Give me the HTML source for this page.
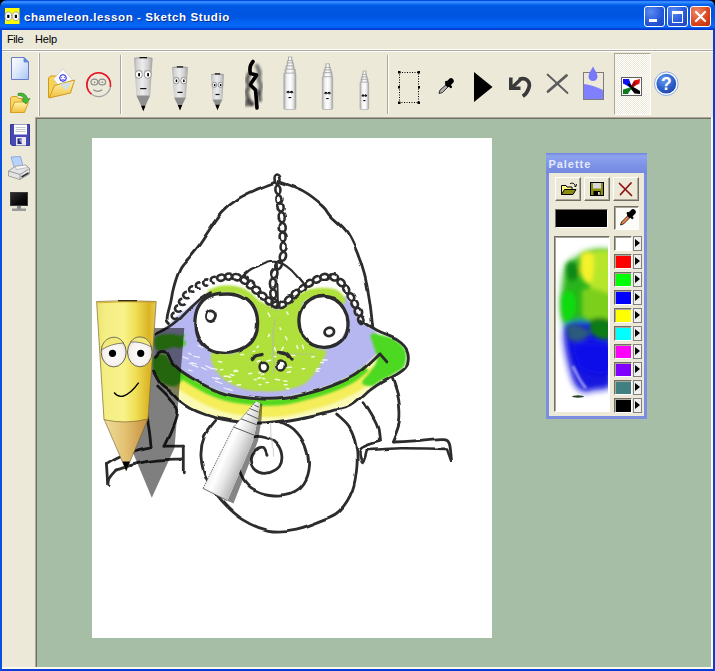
<!DOCTYPE html>
<html><head><meta charset="utf-8"><title>chameleon.lesson - Sketch Studio</title>
<style>
html,body{margin:0;padding:0;}
body{width:715px;height:671px;overflow:hidden;background:#0a3cd8;position:relative;font-family:"Liberation Sans",sans-serif;}
.abs{position:absolute;}
#title{left:0;top:0;width:715px;height:30px;border-radius:7px 7px 0 0;background:linear-gradient(#0046e0 0%,#0a52ea 3%,#3a94ff 5.5%,#3088fc 9%,#0c6af0 14%,#0058e2 20%,#0055e0 55%,#0260f0 70%,#0468f8 85%,#0462f2 91%,#0040d8 96%,#0034c8 100%);}
#title .t{position:absolute;left:24px;top:10.5px;font-size:11.5px;line-height:13px;font-weight:bold;color:#fff;white-space:nowrap;text-shadow:1px 1px 0 #0a2a8a;letter-spacing:0.6px}
.tb{position:absolute;top:6px;width:19px;height:19px;border:1px solid #fff;border-radius:3px;background:radial-gradient(circle at 30% 25%,#5a8af0,#2456d8 60%,#1a46c0);}
#menu{left:2px;top:30px;width:711px;height:19px;background:#ece9d8;font-size:11px;color:#000;}
#menu span{position:absolute;top:3px}
#client{left:2px;top:49px;width:711px;height:620px;background:#ece9d8;}
#green{left:37px;top:119px;width:674px;height:548px;background:#a6bda6;}
#paper{left:92px;top:138px;width:400px;height:500px;background:#fff;}
.hl{position:absolute;height:1px}
.vl{position:absolute;width:1px}
#pal{left:546px;top:153px;width:101px;height:266px;background:#7b8ee0;}
#palc{left:549px;top:173px;width:95px;height:243px;background:#ece9d8;}
.pt{position:absolute;left:548.5px;top:157.5px;font-size:11px;font-weight:bold;color:#e4eafc;letter-spacing:0.95px}
.pb{position:absolute;top:177px;width:24px;height:22px;background:#ece9d8;border:1px solid;border-color:#fff #716f64 #716f64 #fff;box-shadow:inset -1px -1px 0 #aca899;}
.sw{position:absolute;left:614px;width:16px;height:13px;border:1px solid;border-color:#716f64 #fff #fff #716f64;box-shadow:inset 1px 1px 0 #aca899}
.ar{position:absolute;left:633px;width:7px;height:13px;background:#f0f0ee;border:1px solid #808080;}
.ar:after{content:"";position:absolute;left:1px;top:2px;border-left:5px solid #000;border-top:4.5px solid transparent;border-bottom:4.5px solid transparent}
</style></head><body>

<div class="abs" style="left:0;top:0;width:8px;height:8px;background:#000"></div><div class="abs" style="left:707px;top:0;width:8px;height:8px;background:#000"></div><div class="abs" style="left:0;top:30px;width:2px;height:641px;background:#0a50e0"></div>
<div id="title" class="abs"><div class="t">chameleon.lesson - Sketch Studio</div>
<div class="tb" style="left:644px"><div class="abs" style="left:4px;top:12px;width:8px;height:3px;background:#fff"></div></div>
<div class="tb" style="left:667px"><div class="abs" style="left:4px;top:4px;width:9px;height:8px;border:1px solid #fff;border-top-width:3px"></div></div>
<div class="tb" style="left:690px;background:radial-gradient(circle at 30% 25%,#f08868,#d8451c 60%,#b83010)"><svg class="abs" style="left:0;top:0" width="19" height="19"><path d="M5 5 L14 14 M14 5 L5 14" stroke="#fff" stroke-width="2.2" stroke-linecap="round"/></svg></div>
</div>
<div id="menu" class="abs"><span style="left:5px;letter-spacing:-0.4px">File</span><span style="left:33px;letter-spacing:-0.2px">Help</span></div>
<div id="client" class="abs"></div>
<div class="hl" style="left:2px;top:49px;width:711px;background:#fff"></div>
<div class="hl" style="left:2px;top:50px;width:711px;background:#aca899"></div>
<div class="hl" style="left:2px;top:51px;width:711px;background:#fff"></div>
<div class="abs" style="left:35px;top:117px;width:676px;height:550px;background:#716f64"></div>
<div class="abs" style="left:35px;top:117px;width:676px;height:1px;background:#aca899"></div>
<div class="abs" style="left:35px;top:117px;width:1px;height:550px;background:#aca899"></div>
<div id="green" class="abs"></div>
<div class="abs" style="left:2px;top:667px;width:711px;height:2px;background:#fdfbee"></div>
<div class="abs" style="left:711px;top:117px;width:2px;height:552px;background:#fdfbee"></div>
<div id="paper" class="abs"></div>
<!-- grips / separators -->
<div class="vl" style="left:38px;top:53px;height:63px;background:#fff"></div>
<div class="vl" style="left:39px;top:53px;height:63px;background:#aca899"></div>
<div class="vl" style="left:120px;top:55px;height:59px;background:#aca899"></div>
<div class="vl" style="left:121px;top:55px;height:59px;background:#fff"></div>
<div class="vl" style="left:387px;top:55px;height:59px;background:#aca899"></div>
<div class="vl" style="left:388px;top:55px;height:59px;background:#fff"></div>
<!-- pressed button -->
<div class="abs" style="left:614px;top:53px;width:35px;height:60px;border:1px solid;border-color:#aca899 #fff #fff #aca899;background:repeating-conic-gradient(#fff 0% 25%,#ece9d8 0% 50%) 0 0/2px 2px"></div>

<svg class="abs" style="left:0;top:0" width="715" height="671" viewBox="0 0 715 671">
<defs>
<linearGradient id="cyl" x1="0" x2="1" y1="0" y2="0"><stop offset="0" stop-color="#a8a8a8"/><stop offset="0.15" stop-color="#d4d4d4"/><stop offset="0.45" stop-color="#ececec"/><stop offset="0.75" stop-color="#d2d2d2"/><stop offset="1" stop-color="#a0a0a0"/></linearGradient>
<linearGradient id="mk" x1="0" x2="1" y1="0" y2="0"><stop offset="0" stop-color="#a8a8a8"/><stop offset="0.25" stop-color="#f0f0f0"/><stop offset="0.55" stop-color="#ffffff"/><stop offset="0.8" stop-color="#e0e0e0"/><stop offset="1" stop-color="#989898"/></linearGradient>
<linearGradient id="doc" x1="0" x2="1" y1="0" y2="1"><stop offset="0" stop-color="#ffffff"/><stop offset="0.5" stop-color="#dbe8fc"/><stop offset="1" stop-color="#a8c4f4"/></linearGradient>
<linearGradient id="fold" x1="0" x2="0" y1="0" y2="1"><stop offset="0" stop-color="#fff6b0"/><stop offset="1" stop-color="#f0c040"/></linearGradient>
<radialGradient id="help" cx="0.4" cy="0.3" r="0.8"><stop offset="0" stop-color="#6a9cf0"/><stop offset="0.6" stop-color="#2c5fc8"/><stop offset="1" stop-color="#1c3fa0"/></radialGradient>
<linearGradient id="mon" x1="0" x2="1" y1="0" y2="1"><stop offset="0" stop-color="#303030"/><stop offset="0.6" stop-color="#0c0c0c"/><stop offset="1" stop-color="#000"/></linearGradient>
<filter id="b1"><feGaussianBlur stdDeviation="1"/></filter>
<filter id="b05"><feGaussianBlur stdDeviation="0.5"/></filter>
</defs>
<!-- app icon -->
<rect x="5" y="8" width="14.500" height="16" fill="#fcfc00"/>
<ellipse cx="8.300" cy="16.200" rx="3.300" ry="4.300" fill="#fff" stroke="#9a9aa4" stroke-width="0.900"/><ellipse cx="15.900" cy="16.200" rx="3.300" ry="4.300" fill="#fff" stroke="#9a9aa4" stroke-width="0.900"/>
<rect x="7.200" y="14.800" width="2.200" height="3.200" fill="#000"/><rect x="14.800" y="14.800" width="2.200" height="3.200" fill="#000"/>
<!-- new doc -->
<path d="M11.5 57.5 H24 L28.5 62 V79.5 H11.5 Z" fill="url(#doc)" stroke="#6c7ccc" stroke-width="1"/>
<path d="M24 57.5 V62 H28.5 Z" fill="#4a90f0" stroke="#6c7ccc" stroke-width="0.8"/>
<!-- open folder + green arrow -->
<path d="M10.5 112.5 L10.5 98 L12 96.5 H17 L18.5 98.5 H25 V101" fill="#f6d86a" stroke="#d8a020" stroke-width="1"/>
<path d="M10.5 112.5 L14.5 102 H28.5 L24.5 112.5 Z" fill="url(#fold)" stroke="#d8a020" stroke-width="1"/>
<path d="M18 93.5 C23 92 27 95 27.5 99 L30 98.5 L26 104 L21.5 100 L24 99.5 C23.5 96.5 21 95 18 95.5 Z" fill="#48b838" stroke="#2c8a20" stroke-width="0.7"/>
<!-- floppy -->
<path d="M10.5 124.5 H29.5 V145.5 H12 L10.5 144 Z" fill="#4848b4" stroke="#383898" stroke-width="1"/>
<rect x="14" y="124.5" width="13" height="10" fill="#fff"/>
<path d="M15.5 127.5 H25.5 M15.5 129.5 H25.5 M15.5 131.5 H25.5" stroke="#c4c4cc" stroke-width="1"/>
<rect x="16" y="137" width="10" height="8.5" fill="#e8e8f0"/>
<path d="M17.500 138.500 H22 V144 H17.500 Z" fill="#28287c"/><path d="M19 140 L22 138.500 V144 Z" fill="#9c9cd0"/>
<!-- printer -->
<path d="M11 157 L20.500 156.500 L23 166.500 L14.500 168 Z" fill="#b8d4fa" stroke="#7c9cd8" stroke-width="0.8"/>
<path d="M8.500 171 L15 166.500 L26 165 L29.500 168.500 L29.500 174 L20 179.500 L8.500 176 Z" fill="#e4e4e4" stroke="#909090" stroke-width="0.8"/>
<path d="M8.500 171 L20 174.500 L29.500 168.500 M20 174.500 V179.500" stroke="#888" stroke-width="0.8" fill="none"/>
<path d="M15 166.500 L26 165 L27.500 167.500 L16.500 169.500 Z" fill="#f8f8f8" stroke="#a0a0a0" stroke-width="0.6"/>
<path d="M21.500 177 L28.500 173" stroke="#303030" stroke-width="1.6"/>
<!-- monitor -->
<rect x="10" y="192" width="18" height="14" fill="#3c3c3c"/>
<rect x="11" y="193" width="16" height="12" fill="url(#mon)"/>
<rect x="17" y="206" width="4" height="3" fill="#8c8c8c"/>
<rect x="12" y="208.500" width="14" height="2.500" fill="#9a9a9a"/>
<!-- folder with mail -->
<path d="M48.500 97.500 L48.500 78 L50.500 76 H57 L59 78.500 H70 V82" fill="#f6d45c" stroke="#d09818" stroke-width="1"/>
<path d="M63 69 L72 79.500 L62 90 L53.500 79 Z" fill="#fff" stroke="#c8c8c8" stroke-width="0.8"/>
<circle cx="63" cy="78" r="3.300" fill="none" stroke="#1010f0" stroke-width="1"/>
<path d="M61.600 77 V78 M64.400 77 V78 M61.500 79.300 Q63 80.800 64.500 79.300" stroke="#1010f0" stroke-width="0.700" fill="none"/>
<path d="M59.500 84 L66 90.500 L72.500 81 Z" fill="#c4dcf0" stroke="#a0b8d0" stroke-width="0.5"/>
<path d="M49 98 L54.500 85.500 L74.500 80 L70.500 93 Z" fill="url(#fold)" stroke="#d09818" stroke-width="1"/>
<path d="M59.500 84 L66 90.500 L72 82" fill="#c8e0f4" opacity="0.85"/>
<!-- smiley -->
<circle cx="98.700" cy="84.700" r="11.900" fill="#ece9d8" stroke="#a0a0a0" stroke-width="1.300"/>
<path d="M91.400 94.100 A11.900 11.900 0 1 1 110.400 86.800" fill="none" stroke="#f01020" stroke-width="1.600"/>
<ellipse cx="94.400" cy="82" rx="3.400" ry="2.900" fill="none" stroke="#8c8c8c" stroke-width="1.200"/>
<ellipse cx="102.200" cy="82" rx="3.400" ry="2.900" fill="none" stroke="#8c8c8c" stroke-width="1.200"/>
<circle cx="94.600" cy="82.300" r="0.800" fill="#777"/><circle cx="102.400" cy="82.300" r="0.800" fill="#777"/>
<path d="M93.300 89.800 Q98 92.800 102.300 89.800" fill="none" stroke="#8c8c8c" stroke-width="1.200"/>
<!-- pens -->
<path d="M134.1 58.2 Q143.3 56.6 152.6 58.2 L150.2 95.5 L136.4 95.5 Z" fill="url(#cyl)"/><path d="M134.6 58.2 Q143.3 56.8 152.1 58.2" stroke="#9a9a9a" stroke-width="1" fill="none"/><path d="M136.4 95.5 L150.2 95.5 L143.3 110.6 Z" fill="#8e8e8e"/><path d="M141.1 105.8 L145.5 105.8 L143.3 111.2 Z" fill="#000"/><rect x="139.6" y="57.0" width="7.4" height="1.3" fill="#111"/><ellipse cx="138.8" cy="74.5" rx="3.6" ry="3.9" fill="#fff" stroke="#8c8c8c" stroke-width="0.9"/><rect x="138.2" y="73.1" width="1.8" height="3.2" fill="#000"/><path d="M135.2 71.3 Q138.8 68.7 142.4 71.3" stroke="#a8a8a8" stroke-width="0.8" fill="none"/><ellipse cx="147.8" cy="74.5" rx="3.6" ry="3.9" fill="#fff" stroke="#8c8c8c" stroke-width="0.9"/><rect x="147.2" y="73.1" width="1.8" height="3.2" fill="#000"/><path d="M144.2 71.3 Q147.8 68.7 151.4 71.3" stroke="#a8a8a8" stroke-width="0.8" fill="none"/><rect x="140.2" y="88.0" width="6.2" height="1.2" fill="#111"/><path d="M172.1 67.5 Q180.0 65.9 187.9 67.5 L185.9 97.6 L174.1 97.6 Z" fill="url(#cyl)"/><path d="M172.6 67.5 Q180.0 66.1 187.4 67.5" stroke="#9a9a9a" stroke-width="1" fill="none"/><path d="M174.1 97.6 L185.9 97.6 L180.0 109.8 Z" fill="#8e8e8e"/><path d="M177.8 105.0 L182.2 105.0 L180.0 110.4 Z" fill="#000"/><rect x="176.8" y="66.3" width="6.3" height="1.3" fill="#111"/><ellipse cx="176.3" cy="80.7" rx="2.9" ry="3.1" fill="#fff" stroke="#8c8c8c" stroke-width="0.9"/><rect x="175.7" y="79.5" width="1.5" height="2.6" fill="#000"/><path d="M173.4 78.1 Q176.3 76.1 179.2 78.1" stroke="#a8a8a8" stroke-width="0.8" fill="none"/><ellipse cx="183.7" cy="80.7" rx="2.9" ry="3.1" fill="#fff" stroke="#8c8c8c" stroke-width="0.9"/><rect x="183.1" y="79.5" width="1.5" height="2.6" fill="#000"/><path d="M180.8 78.1 Q183.7 76.1 186.6 78.1" stroke="#a8a8a8" stroke-width="0.8" fill="none"/><rect x="177.5" y="91.8" width="5.0" height="1.2" fill="#111"/><path d="M211.0 74.5 Q217.5 72.9 224.0 74.5 L222.4 99.5 L212.6 99.5 Z" fill="url(#cyl)"/><path d="M211.5 74.5 Q217.5 73.1 223.5 74.5" stroke="#9a9a9a" stroke-width="1" fill="none"/><path d="M212.6 99.5 L222.4 99.5 L217.5 109.6 Z" fill="#8e8e8e"/><path d="M215.3 104.8 L219.7 104.8 L217.5 110.2 Z" fill="#000"/><rect x="214.9" y="73.3" width="5.2" height="1.3" fill="#111"/><ellipse cx="214.5" cy="85.0" rx="2.3" ry="2.5" fill="#fff" stroke="#8c8c8c" stroke-width="0.9"/><rect x="213.9" y="84.1" width="1.5" height="2.1" fill="#000"/><path d="M212.2 82.9 Q214.5 81.3 216.8 82.9" stroke="#a8a8a8" stroke-width="0.8" fill="none"/><ellipse cx="220.5" cy="85.0" rx="2.3" ry="2.5" fill="#fff" stroke="#8c8c8c" stroke-width="0.9"/><rect x="219.9" y="84.1" width="1.5" height="2.1" fill="#000"/><path d="M218.2 82.9 Q220.5 81.3 222.8 82.9" stroke="#a8a8a8" stroke-width="0.8" fill="none"/><rect x="215.5" y="93.9" width="4.0" height="1.2" fill="#111"/>
<!-- brush -->
<g filter="url(#b1)">
<path d="M257 66 L259.500 72 L259 80 L261 86 L259 94" stroke="#555" stroke-width="4.500" fill="none" opacity="0.75" stroke-linecap="round"/>
<path d="M249 74 L247 80 L249 86 L246.500 92 L248 98 L247 104 L252 104" stroke="#484848" stroke-width="4.500" fill="none" opacity="0.8" stroke-linecap="round"/>
<path d="M249 100 L252 104 M259 92 L260 100" stroke="#2c2c2c" stroke-width="4" fill="none" opacity="0.7" stroke-linecap="round"/>
</g>
<path d="M253 61.500 C250 65 249.500 70 250.500 73.500 L256.500 75 C255 79 251 82 250.500 85 L255.500 90 C256 96 256.500 101 257 108" stroke="#000" stroke-width="3.600" fill="none" stroke-linecap="round" stroke-linejoin="round"/>
<!-- markers -->
<rect x="288.3" y="57.0" width="3.6" height="3.7" fill="url(#mk)" stroke="#a4a4a4" stroke-width="0.7"/><rect x="287.4" y="60.7" width="5.4" height="2.3" fill="url(#mk)" stroke="#a4a4a4" stroke-width="0.7"/><rect x="287.0" y="63.0" width="6.4" height="3.0" fill="url(#mk)" stroke="#a4a4a4" stroke-width="0.7"/><rect x="286.0" y="66.0" width="8.0" height="3.2" fill="url(#mk)" stroke="#a4a4a4" stroke-width="0.7"/><rect x="285.0" y="69.2" width="10.2" height="4.0" fill="url(#mk)" stroke="#a4a4a4" stroke-width="0.7"/><path d="M283.8 73.2 H295.9 V108.0 Q295.9 109.5 294.4 109.5 H285.3 Q283.8 109.5 283.8 108.0 Z" fill="url(#mk)" stroke="#aaaaaa" stroke-width="0.7"/><path d="M286.8 92.8 Q288.2 89.8 289.5 92.8" stroke="#000" stroke-width="1.3" fill="none"/><rect x="287.7" y="91.8" width="1" height="1.6" fill="#222"/><path d="M290.2 92.8 Q291.6 89.8 292.9 92.8" stroke="#000" stroke-width="1.3" fill="none"/><rect x="291.1" y="91.8" width="1" height="1.6" fill="#222"/><rect x="288.5" y="97.0" width="2.7" height="1.1" fill="#000"/><rect x="325.9" y="63.8" width="3.5" height="3.6" fill="url(#mk)" stroke="#a4a4a4" stroke-width="0.7"/><rect x="325.0" y="67.4" width="5.3" height="2.6" fill="url(#mk)" stroke="#a4a4a4" stroke-width="0.7"/><rect x="324.0" y="70.0" width="7.2" height="2.8" fill="url(#mk)" stroke="#a4a4a4" stroke-width="0.7"/><rect x="323.2" y="72.8" width="8.9" height="4.0" fill="url(#mk)" stroke="#a4a4a4" stroke-width="0.7"/><path d="M322.3 76.8 H332.7 V108.0 Q332.7 109.5 331.2 109.5 H323.8 Q322.3 109.5 322.3 108.0 Z" fill="url(#mk)" stroke="#aaaaaa" stroke-width="0.7"/><path d="M324.6 93.8 Q325.9 90.8 327.2 93.8" stroke="#000" stroke-width="1.3" fill="none"/><rect x="325.4" y="92.8" width="1" height="1.6" fill="#222"/><path d="M327.8 93.8 Q329.1 90.8 330.4 93.8" stroke="#000" stroke-width="1.3" fill="none"/><rect x="328.6" y="92.8" width="1" height="1.6" fill="#222"/><rect x="326.2" y="98.0" width="2.5" height="1.1" fill="#000"/><rect x="363.0" y="71.0" width="3.0" height="3.5" fill="url(#mk)" stroke="#a4a4a4" stroke-width="0.7"/><rect x="362.3" y="74.5" width="4.3" height="2.5" fill="url(#mk)" stroke="#a4a4a4" stroke-width="0.7"/><rect x="361.6" y="77.0" width="5.7" height="2.3" fill="url(#mk)" stroke="#a4a4a4" stroke-width="0.7"/><rect x="361.0" y="79.3" width="7.0" height="2.9" fill="url(#mk)" stroke="#a4a4a4" stroke-width="0.7"/><path d="M360.0 82.2 H368.7 V108.1 Q368.7 109.6 367.2 109.6 H361.5 Q360.0 109.6 360.0 108.1 Z" fill="url(#mk)" stroke="#aaaaaa" stroke-width="0.7"/><path d="M362.0 96.3 Q363.0 93.3 364.0 96.3" stroke="#000" stroke-width="1.3" fill="none"/><rect x="362.5" y="95.3" width="1" height="1.6" fill="#222"/><path d="M364.7 96.3 Q365.7 93.3 366.7 96.3" stroke="#000" stroke-width="1.3" fill="none"/><rect x="365.2" y="95.3" width="1" height="1.6" fill="#222"/><rect x="363.3" y="100.0" width="2.1" height="1.1" fill="#000"/>
<!-- selection rect -->
<rect x="399.500" y="72.500" width="19" height="30" fill="none" stroke="#000" stroke-width="1" stroke-dasharray="1 1.500"/>
<g fill="#000"><rect x="398" y="71" width="2.500" height="2.500"/><rect x="417.500" y="71" width="2.500" height="2.500"/><rect x="398" y="101.500" width="2.500" height="2.500"/><rect x="417.500" y="101.500" width="2.500" height="2.500"/><rect x="398" y="86" width="2" height="2.500"/><rect x="418" y="86" width="2" height="2.500"/></g>
<!-- eyedropper -->
<path d="M439 93.500 L440 90 L447.500 83.500 L449.500 85.500 L442.500 92.500 Z" fill="#b0b0b0" stroke="#202020" stroke-width="0.9"/>
<path d="M446.200 82.200 L450.800 86.800" stroke="#000" stroke-width="2.600" stroke-linecap="round"/>
<path d="M448 84 L451 81" stroke="#000" stroke-width="5.500" stroke-linecap="round"/>
<!-- play -->
<path d="M474 72 L492.500 87 L474 102 Z" fill="#000"/>
<!-- undo -->
<path d="M519 79.500 C526 76.500 531 82 528.800 88 C527.800 91.500 525.500 94.500 522.800 96.300" fill="none" stroke="#3a3a3a" stroke-width="3.700" stroke-linecap="butt"/>
<path d="M509 77.500 H512.600 V86.500 H520.500 V90 H509 Z" fill="#3a3a3a"/>
<path d="M511 88.500 L520.500 79.500" stroke="#3a3a3a" stroke-width="3.400"/>
<!-- X -->
<path d="M547.500 74.500 L567.500 93" stroke="#5c5c5c" stroke-width="1.800" stroke-linecap="round"/>
<path d="M566.500 75.500 L548 91.500" stroke="#5c5c5c" stroke-width="2.800" stroke-linecap="round"/>
<!-- fill -->
<rect x="583.500" y="72.500" width="20" height="27" fill="#ece9d8" stroke="#7c7c7c" stroke-width="1"/>
<path d="M584 84 C590 84.500 596 87 603 90 V99 H584 Z" fill="#8080ff"/>
<path d="M593 66.500 C594.500 70 597.500 73 597.500 76.500 A4.500 4.500 0 0 1 588.500 76.500 C588.500 73 591.500 70 593 66.500 Z" fill="#7878f8"/>
<!-- color icon -->
<rect x="621.500" y="77.500" width="20" height="18" fill="#fff" stroke="#606060" stroke-width="1"/>
<path d="M623 79 L629 79 L630.500 83.500 L632 86.500 L630 87.500 L626 85 L623 83.500 Z" fill="#1010f0"/>
<path d="M634 80.500 L640 79 L639.500 83.500 L635 86 L632.500 88 L631 86 Z" fill="#e01010"/>
<path d="M623 89.500 L628.500 88 L631 86.500 L632 88.500 L629 92 L628 94 L623 94 Z" fill="#0c7c1c"/>
<path d="M632 86.500 L636 88.500 L640 91 L640 94 L634.500 93.500 L631 89 Z" fill="#000"/>
<path d="M628.500 84 L635 90.500" stroke="#000" stroke-width="2"/>
<path d="M635.500 82 L632 87" stroke="#7c1010" stroke-width="2"/>
<!-- help -->
<circle cx="666.300" cy="83.700" r="11.800" fill="#fff" stroke="#8caae6" stroke-width="1"/>
<circle cx="666.300" cy="83.700" r="9.900" fill="url(#help)"/>
<text x="666.300" y="89.900" font-family="Liberation Sans, sans-serif" font-weight="bold" font-size="17.500" fill="#fff" text-anchor="middle">?</text>
</svg>
<svg class="abs" style="left:0;top:0" width="715" height="671" viewBox="0 0 715 671">
<defs>
<filter id="pf1" x="-10%" y="-10%" width="120%" height="120%"><feGaussianBlur stdDeviation="1.2"/></filter>
<filter id="pf2" x="-10%" y="-10%" width="120%" height="120%"><feGaussianBlur stdDeviation="2.2"/></filter>
<filter id="wob" color-interpolation-filters="sRGB" x="-5%" y="-5%" width="110%" height="110%"><feTurbulence type="fractalNoise" baseFrequency="0.035" numOctaves="2" seed="4" result="n"/><feDisplacementMap in="SourceGraphic" in2="n" scale="4.5" xChannelSelector="R" yChannelSelector="G"/></filter>
<clipPath id="paperc"><rect x="92" y="138" width="400" height="500"/></clipPath>
<linearGradient id="pcl" x1="0" x2="1" y1="0" y2="0"><stop offset="0" stop-color="#ece472"/><stop offset="0.15" stop-color="#f4ee84"/><stop offset="0.45" stop-color="#f7f28a"/><stop offset="0.65" stop-color="#f0e058"/><stop offset="0.88" stop-color="#dab424"/><stop offset="1" stop-color="#e6cc58"/></linearGradient>
<linearGradient id="pcone" x1="0" x2="1" y1="0" y2="0"><stop offset="0" stop-color="#f0dc9a"/><stop offset="0.5" stop-color="#e2c070"/><stop offset="1" stop-color="#c48e3c"/></linearGradient>
<linearGradient id="mtool" gradientUnits="userSpaceOnUse" x1="214" y1="455" x2="246" y2="469"><stop offset="0.05" stop-color="#ececec"/><stop offset="0.3" stop-color="#ffffff"/><stop offset="0.55" stop-color="#e6e6e6"/><stop offset="0.85" stop-color="#bcbcbc"/><stop offset="1" stop-color="#acacac"/></linearGradient>
<radialGradient id="eyeg" cx="0.5" cy="0.55" r="0.6"><stop offset="0" stop-color="#ffffff"/><stop offset="0.7" stop-color="#f4f0ec"/><stop offset="1" stop-color="#c8bcb4"/></radialGradient>
</defs>
<g clip-path="url(#paperc)">
<g filter="url(#pf1)">
<path d="M154.5 335.5 L159.4 331.7 L169.0 325.0 L175.0 318.0 L202.0 297.5 L215.0 300.0 L260.0 305.0 L274.2 307.0 L281.8 307.0 L300.0 300.0 L340.0 298.0 L347.0 296.0 L353.2 305.0 L357.0 312.0 L359.6 321.0 L376.0 330.7 L380.0 345.0 L379.0 352.5 L366.5 364.4 L351.9 375.8 L329.5 385.9 L307.0 392.6 L284.8 397.7 L262.4 398.6 L240.0 396.5 L225.0 393.5 L207.8 386.9 L190.4 377.2 L178.8 369.5 L171.0 361.7 L167.0 354.0 L161.3 352.0 L158.0 353.0 L154.5 356.9 Z" fill="#b6b6f0"/>
<path d="M154.5 356.9 L158.0 353.0 L161.3 352.0 L167.0 354.0 L171.0 361.7 L178.8 369.5 L190.4 377.2 L207.8 386.9 L225.0 393.5 L240.0 396.5 L262.4 398.6 L284.8 397.7 L307.0 392.6 L329.5 385.9 L351.9 375.8 L366.5 364.4 L379.0 352.5 L393.8 375.0 L381.0 381.4 L381.0 381.4 L369.8 389.2 L350.0 405.3 L330.7 410.3 L314.0 414.5 L297.0 418.0 L280.4 420.8 L266.0 422.2 L251.4 422.6 L235.0 421.0 L217.5 418.0 L204.0 414.0 L190.4 408.2 L178.8 400.5 L169.0 390.8 L159.4 383.0 L152.6 371.4 Z" fill="#fafab4"/>
<path d="M167.0 366.0 C167.7 367.3 169.0 371.1 171.0 373.7 C173.0 376.3 175.6 378.9 178.8 381.5 C182.0 384.1 185.6 386.3 190.4 389.2 C195.2 392.1 202.0 396.2 207.8 398.9 C213.6 401.6 219.6 403.9 225.0 405.5 C230.4 407.1 233.8 407.6 240.0 408.5 C246.2 409.4 254.9 410.4 262.4 410.6 C269.9 410.8 277.4 410.7 284.8 409.7 C292.2 408.7 299.6 406.6 307.0 404.6 C314.4 402.6 322.0 400.7 329.5 397.9 C337.0 395.1 346.5 390.6 351.9 387.8 C357.3 385.0 358.0 383.6 362.0 381.0 C366.0 378.4 373.7 373.5 376.0 372.0" fill="none" stroke="#f4ee5a" stroke-width="13" stroke-linecap="butt"/>
</g>
<g filter="url(#pf1)">
<path d="M256.0 300.0 C257.5 299.2 262.8 302.5 266.0 304.0 C269.2 305.5 272.2 308.3 275.0 309.0 C277.8 309.7 280.0 309.3 283.0 308.0 C286.0 306.7 290.0 302.3 293.0 301.0 C296.0 299.7 299.3 297.2 301.0 300.0 C302.7 302.8 302.5 312.2 303.0 318.0 C303.5 323.8 302.8 330.8 304.0 335.0 C305.2 339.2 307.7 340.7 310.0 343.0 C312.3 345.3 315.3 347.7 318.0 349.0 C320.7 350.3 325.3 348.8 326.0 351.0 C326.7 353.2 324.0 358.2 322.0 362.0 C320.0 365.8 317.2 370.2 314.0 374.0 C310.8 377.8 308.3 381.8 303.0 384.5 C297.7 387.2 289.8 389.4 282.0 390.5 C274.2 391.6 263.3 391.6 256.0 391.0 C248.7 390.4 243.2 388.8 238.0 387.0 C232.8 385.2 228.7 382.8 225.0 380.0 C221.3 377.2 218.3 373.5 216.0 370.0 C213.7 366.5 211.3 362.2 211.0 359.0 C210.7 355.8 211.0 351.8 214.0 351.0 C217.0 350.2 224.2 354.3 229.0 354.0 C233.8 353.7 239.2 351.5 243.0 349.0 C246.8 346.5 249.7 343.3 252.0 339.0 C254.3 334.7 256.2 328.0 257.0 323.0 C257.8 318.0 257.2 312.8 257.0 309.0 C256.8 305.2 254.5 300.8 256.0 300.0 Z" fill="#b0e03a"/>
<path d="M211.0 293.0 C212.3 292.5 216.2 290.7 219.0 290.0 C221.8 289.3 224.8 288.9 228.0 289.0 C231.2 289.1 235.2 289.6 238.4 290.5 C241.6 291.4 244.6 292.9 247.0 294.5 C249.4 296.1 251.0 298.1 253.0 300.0 C255.0 301.9 258.0 305.0 259.0 306.0" fill="none" stroke="#b0e03a" stroke-width="7.5" stroke-linecap="round"/>
<path d="M294.0 306.0 C294.8 305.0 296.7 301.9 299.0 300.0 C301.3 298.1 304.9 295.8 308.0 294.5 C311.1 293.2 314.4 292.8 317.7 292.5 C321.0 292.2 324.9 292.2 328.0 292.5 C331.1 292.8 333.8 293.2 336.0 294.5 C338.2 295.8 340.2 299.1 341.0 300.0" fill="none" stroke="#b0e03a" stroke-width="9" stroke-linecap="round"/>
</g>
<path d="M286.9 312.0 l1.2 2.3 M261.5 374.6 l2.1 -0.4 M284.3 384.7 l2.7 0.1 M248.5 373.7 l3.2 -0.5 M285.6 336.9 l1.4 2.8 M283.3 347.2 l-1.9 3.3 M266.1 382.6 l2.2 -0.2 M234.1 370.7 l2.3 -0.5 M269.5 334.5 l-1.2 2.0 M260.8 368.8 l2.9 -0.5 M218.4 361.5 l3.2 0.4 M291.9 355.3 l2.9 0.1 M267.1 361.1 l3.5 -0.8 M286.5 388.4 l2.3 0.4 M257.2 361.5 l2.8 -0.7 M220.6 369.8 l2.2 -0.4 M257.8 378.3 l2.8 -0.6 M275.5 379.3 l4.0 0.7 M254.2 379.4 l1.9 0.4 M280.0 327.8 l0.9 1.7 M273.9 356.6 l1.9 -0.2 M287.4 367.4 l4.1 -0.1 M320.6 362.5 l2.7 0.1 M258.1 346.0 l-0.9 1.5 M311.9 357.0 l2.2 -0.4 M227.8 376.5 l2.8 0.7 M268.2 313.1 l1.7 3.3 M296.9 345.7 l0.8 2.9 M237.0 385.0 l3.6 -0.2 M316.4 368.9 l3.4 -0.3 M224.2 376.2 l4.2 0.0 M274.7 347.7 l0.9 3.2 M302.3 368.9 l2.2 -0.3 M258.9 372.7 l2.9 -0.4 M302.5 345.2 l1.0 3.4 M283.9 380.7 l2.9 0.5 M287.1 372.4 l3.4 -0.7 M315.9 370.9 l2.9 0.4 M234.0 371.5 l3.9 -0.3 M259.0 384.6 l2.0 0.2 M230.4 374.6 l3.4 0.8 M253.2 351.5 l1.5 -0.3 M322.7 359.9 l4.3 0.1 M262.6 378.4 l2.1 0.3 M240.9 354.7 l2.7 -0.3 M228.7 381.5 l2.9 -0.2 " stroke="#ffffff" stroke-width="1.5" opacity="0.85" fill="none" stroke-linecap="round"/>
<path d="M212.1 368.3 l5.0 1.0 M192.3 365.0 l5.5 2.1 M201.6 367.5 l4.7 2.2 M188.4 369.9 l3.8 1.1 M215.7 381.3 l6.3 2.2 M212.7 377.5 l4.5 1.7 M224.0 388.0 l6.5 1.9 M189.3 363.2 l3.2 0.9 M229.0 389.1 l3.3 1.5 M205.9 365.8 l6.3 3.0 M191.7 362.6 l4.8 1.5 M193.7 356.2 l5.8 1.2 M183.1 356.9 l5.2 1.9 M188.3 353.1 l2.9 1.3 M198.2 345.4 l4.2 2.1 M216.2 377.9 l3.3 0.7 " stroke="#ffffff" stroke-width="1.300" opacity="0.75" fill="none" stroke-linecap="round"/>
<path d="M270 354 H315" stroke="#b8b8b8" stroke-width="0.800" opacity="0.7"/>
<g filter="url(#pf1)">
<path d="M171.0 365.5 C172.3 366.8 175.6 370.7 178.8 373.3 C182.0 375.9 185.6 378.1 190.4 381.0 C195.2 383.9 202.0 388.0 207.8 390.7 C213.6 393.4 219.6 395.7 225.0 397.3 C230.4 398.9 233.8 399.4 240.0 400.3 C246.2 401.2 254.9 402.2 262.4 402.4 C269.9 402.6 277.4 402.5 284.8 401.5 C292.2 400.5 299.6 398.4 307.0 396.4 C314.4 394.4 322.0 392.5 329.5 389.7 C337.0 386.9 345.7 383.2 351.9 379.6 C358.1 376.0 364.1 370.1 366.5 368.2" fill="none" stroke="#52d81c" stroke-width="6.5" stroke-linecap="butt"/>
<path d="M371.0 334.0 C372.8 332.2 380.8 334.9 385.0 336.0 C389.2 337.1 392.9 338.0 396.3 340.5 C399.7 343.0 404.1 346.8 405.5 351.0 C406.9 355.2 406.4 362.2 404.5 366.0 C402.6 369.8 397.7 371.6 393.8 374.0 C389.9 376.4 384.6 378.5 381.0 380.5 C377.4 382.5 375.2 385.6 372.0 386.0 C368.8 386.4 362.3 385.3 362.0 383.0 C361.7 380.7 367.5 375.8 370.0 372.0 C372.5 368.2 376.3 364.2 377.0 360.0 C377.7 355.8 375.0 351.3 374.0 347.0 C373.0 342.7 369.2 335.8 371.0 334.0 Z" fill="#4ed820"/>
</g>
<g filter="url(#pf1)"><path d="M155.0 337.5 C156.2 335.8 159.2 335.1 162.0 334.5 C164.8 333.9 169.0 333.8 172.0 334.0 C175.0 334.2 177.8 335.6 180.0 335.5 C182.2 335.4 184.5 332.9 185.0 333.5 C185.5 334.1 182.8 337.4 183.0 339.0 C183.2 340.6 186.3 341.5 186.0 343.0 C185.7 344.5 183.0 347.3 181.0 348.0 C179.0 348.7 176.5 346.8 174.0 347.0 C171.5 347.2 168.7 348.9 166.0 349.5 C163.3 350.1 159.9 351.2 158.0 350.5 C156.1 349.8 155.0 347.2 154.5 345.0 C154.0 342.8 153.8 339.2 155.0 337.5 Z" fill="#46cc1e"/><path d="M153.0 358.0 C154.1 355.2 157.7 354.3 160.0 354.0 C162.3 353.7 165.2 354.5 167.0 356.0 C168.8 357.5 169.2 360.7 171.0 363.0 C172.8 365.3 176.0 368.1 178.0 370.0 C180.0 371.9 182.4 372.7 183.0 374.5 C183.6 376.3 182.8 379.1 181.5 381.0 C180.2 382.9 177.4 385.3 175.0 386.0 C172.6 386.7 169.7 385.9 167.0 385.0 C164.3 384.1 161.2 382.8 159.0 380.5 C156.8 378.2 154.5 374.8 153.5 371.0 C152.5 367.2 151.9 360.8 153.0 358.0 Z" fill="#46cc1e"/></g>
<ellipse cx="225.2" cy="322.5" rx="31.3" ry="30" fill="#fff"/>
<ellipse cx="322.5" cy="321.5" rx="24.5" ry="25.3" fill="#fff"/>
<g filter="url(#wob)" transform="translate(1 0.5)">
<path d="M274.3 181.6 C271.4 182.7 263.0 185.7 256.9 188.4 C250.8 191.2 243.3 194.4 237.5 198.1 C231.7 201.8 226.5 206.0 222.0 210.7 C217.5 215.4 214.3 220.7 210.4 226.2 C206.5 231.7 202.7 238.2 198.8 243.6 C194.9 249.0 190.2 254.6 187.0 258.5 C183.8 262.4 181.8 263.8 179.8 267.2 C177.8 270.6 176.3 275.2 175.0 279.0 C173.7 282.8 172.9 286.0 172.0 289.8 C171.1 293.6 170.6 297.8 169.7 301.8 C168.8 305.8 167.3 310.7 166.7 313.7 C166.1 316.7 165.8 318.1 166.1 319.7 C166.4 321.3 168.1 322.6 168.5 323.2" fill="none" stroke="#2c2c2c" stroke-width="2.8" stroke-linecap="round" stroke-linejoin="round" />
<path d="M278.0 181.0 C282.0 182.6 294.6 186.3 302.0 190.4 C309.4 194.5 317.7 201.4 322.4 205.6 C327.1 209.8 326.5 211.5 330.4 215.7 C334.3 219.9 341.4 225.1 345.6 231.0 C349.8 236.9 352.8 244.0 355.8 251.2 C358.8 258.4 361.3 266.0 363.4 274.0 C365.5 282.0 367.1 290.5 368.5 299.4 C369.9 308.3 371.2 322.6 371.8 327.3" fill="none" stroke="#2c2c2c" stroke-width="2.8" stroke-linecap="round" stroke-linejoin="round" />
<path d="M238.7 279.0 C240.1 277.7 244.0 273.1 247.0 271.0 C250.0 268.9 253.5 267.8 256.5 266.4 C259.5 265.0 262.1 263.4 265.0 262.5 C267.9 261.6 271.4 261.1 274.2 261.3 C277.0 261.5 279.4 262.2 282.0 263.5 C284.6 264.8 287.0 266.8 289.5 269.0 C292.0 271.2 294.5 274.1 297.0 277.0 C299.5 279.9 303.4 285.1 304.7 286.7" fill="none" stroke="#2c2c2c" stroke-width="2.2" stroke-linecap="round" stroke-linejoin="round" />
<path d="M276.0 264.0 C276.1 267.2 276.3 276.7 276.5 283.0 C276.7 289.3 276.9 298.8 277.0 302.0" fill="none" stroke="#2c2c2c" stroke-width="1.8" stroke-linecap="round" stroke-linejoin="round" />
<path d="M154.8 334.0 C157.0 332.8 164.1 329.2 167.9 326.8 C171.7 324.4 173.8 322.9 177.4 319.7 C181.0 316.5 185.4 311.5 189.4 307.7 C193.4 303.9 197.9 299.6 201.3 297.0 C204.7 294.4 208.3 293.0 209.7 292.2" fill="none" stroke="#2c2c2c" stroke-width="2.6" stroke-linecap="round" stroke-linejoin="round" />
<path d="M154.5 356.9 C155.1 356.2 156.9 353.8 158.0 353.0 C159.1 352.2 159.8 351.8 161.3 352.0 C162.8 352.2 165.4 352.4 167.0 354.0 C168.6 355.6 169.0 359.1 171.0 361.7 C173.0 364.3 175.6 366.9 178.8 369.5 C182.0 372.1 185.6 374.3 190.4 377.2 C195.2 380.1 202.0 384.2 207.8 386.9 C213.6 389.6 219.6 391.9 225.0 393.5 C230.4 395.1 233.8 395.6 240.0 396.5 C246.2 397.4 254.9 398.4 262.4 398.6 C269.9 398.8 277.4 398.7 284.8 397.7 C292.2 396.7 299.6 394.6 307.0 392.6 C314.4 390.6 322.0 388.7 329.5 385.9 C337.0 383.1 345.7 379.4 351.9 375.8 C358.1 372.2 362.0 368.3 366.5 364.4 C371.0 360.5 376.9 354.5 379.0 352.5" fill="none" stroke="#2c2c2c" stroke-width="2.9" stroke-linecap="round" stroke-linejoin="round" />
<path d="M379.0 352.5 L386.0 360.5" fill="none" stroke="#2c2c2c" stroke-width="2.7" stroke-linecap="round" stroke-linejoin="round" />
<path d="M152.6 371.4 C153.7 373.3 156.7 379.8 159.4 383.0 C162.1 386.2 165.8 387.9 169.0 390.8 C172.2 393.7 175.2 397.6 178.8 400.5 C182.4 403.4 186.2 405.9 190.4 408.2 C194.6 410.4 199.5 412.4 204.0 414.0 C208.5 415.6 212.3 416.8 217.5 418.0 C222.7 419.2 229.3 420.2 235.0 421.0 C240.7 421.8 246.2 422.4 251.4 422.6 C256.6 422.8 261.2 422.5 266.0 422.2 C270.8 421.9 275.2 421.5 280.4 420.8 C285.6 420.1 291.4 419.1 297.0 418.0 C302.6 416.9 308.4 415.8 314.0 414.5 C319.6 413.2 324.7 411.8 330.7 410.3 C336.7 408.8 343.5 408.8 350.0 405.3 C356.5 401.8 364.6 393.2 369.8 389.2 C375.0 385.2 377.0 383.8 381.0 381.4 C385.0 379.0 389.8 377.5 393.8 375.0 C397.8 372.5 403.1 370.2 405.2 366.2 C407.3 362.2 408.0 355.4 406.5 351.0 C405.0 346.6 401.4 343.0 396.3 339.6 C391.2 336.2 382.1 333.9 376.0 330.7 C369.9 327.5 362.3 322.2 359.6 320.5" fill="none" stroke="#2c2c2c" stroke-width="2.9" stroke-linecap="round" stroke-linejoin="round" />
<path d="M226.0 292.5 C231.6 292.4 236.7 293.4 241.0 295.5 C245.3 297.6 249.4 300.9 252.0 305.0 C254.6 309.1 256.2 314.8 256.5 320.0 C256.8 325.2 255.9 331.6 254.0 336.0 C252.1 340.4 248.7 343.8 245.0 346.5 C241.3 349.2 236.3 351.0 232.0 352.0 C227.7 353.0 223.4 353.2 219.0 352.5 C214.6 351.8 209.2 350.2 205.5 347.5 C201.8 344.8 198.5 340.6 196.6 336.5 C194.7 332.4 193.7 327.9 193.8 323.0 C193.9 318.1 194.7 311.5 197.0 307.0 C199.3 302.5 202.7 298.4 207.5 296.0 C212.3 293.6 220.4 292.6 226.0 292.5 Z" fill="none" stroke="#2c2c2c" stroke-width="3.3" stroke-linecap="round" stroke-linejoin="round" />
<path d="M322.5 296.0 C326.5 296.0 330.6 296.9 334.0 299.0 C337.4 301.1 340.8 304.8 343.0 308.5 C345.2 312.2 346.8 316.7 347.0 321.0 C347.2 325.3 346.3 330.8 344.5 334.5 C342.7 338.2 339.5 341.4 336.0 343.5 C332.5 345.6 327.6 346.7 323.5 346.8 C319.4 346.9 315.0 346.0 311.5 344.2 C308.0 342.4 304.8 339.6 302.5 336.0 C300.2 332.4 298.3 327.1 298.0 322.5 C297.7 317.9 298.5 312.4 300.5 308.5 C302.5 304.6 306.3 301.1 310.0 299.0 C313.7 296.9 318.5 296.0 322.5 296.0 Z" fill="none" stroke="#2c2c2c" stroke-width="3.3" stroke-linecap="round" stroke-linejoin="round" />
<ellipse cx="210.5" cy="315.3" rx="4.9" ry="5.8" fill="#fff" stroke="#2c2c2c" stroke-width="2.9" transform="rotate(15 210.8 315)"/>
<ellipse cx="328.3" cy="330.4" rx="4.8" ry="4.1" fill="#fff" stroke="#2c2c2c" stroke-width="2.8" transform="rotate(-20 328.3 330.4)"/>
<ellipse cx="262.8" cy="366.2" rx="4.2" ry="4.9" fill="#fff" stroke="#2c2c2c" stroke-width="2.5"/>
<ellipse cx="279.6" cy="365" rx="4.2" ry="4.9" fill="#fff" stroke="#2c2c2c" stroke-width="2.5"/>
<path d="M251.4 359.0 C252.0 358.4 253.2 356.2 255.0 355.3 C256.8 354.4 260.8 354.1 262.0 353.9" fill="none" stroke="#2c2c2c" stroke-width="3.3" stroke-linecap="round" stroke-linejoin="round" />
<path d="M278.5 352.0 C279.7 352.3 283.6 352.6 285.5 353.8 C287.4 355.1 289.2 358.6 290.0 359.5" fill="none" stroke="#2c2c2c" stroke-width="3.3" stroke-linecap="round" stroke-linejoin="round" />
<path d="M273.6 318.0 L272.5 372.0" fill="none" stroke="#b4b4b4" stroke-width="0.9" stroke-linecap="round" stroke-linejoin="round" />
<g fill="none" stroke="#2c2c2c" stroke-width="2.6"><path d="M177.2 317.0 A3.6 3.2 0 1 1 173.6 312.1"/><path d="M180.5 310.0 A3.6 3.2 0 1 1 177.1 304.9"/><path d="M184.4 303.3 A3.6 3.2 0 1 1 181.3 298.1"/><path d="M188.3 296.9 A3.6 3.2 0 1 1 185.9 291.4"/><path d="M193.3 291.8 A3.6 3.2 0 1 1 192.2 285.8"/><path d="M199.6 288.1 A3.6 3.2 0 1 1 199.7 282.1"/><path d="M206.5 285.2 A3.6 3.2 0 1 1 207.3 279.2"/><path d="M213.8 282.7 A3.6 3.2 0 1 1 215.0 276.7"/><ellipse cx="220.1" cy="277.2" rx="4.0" ry="3.1" transform="rotate(-12 220.1 277.2)"/><ellipse cx="228.0" cy="276.1" rx="4.0" ry="3.1" transform="rotate(-2 228.0 276.1)"/><ellipse cx="236.1" cy="276.7" rx="4.0" ry="3.1" transform="rotate(14 236.1 276.7)"/><ellipse cx="243.4" cy="280.0" rx="4.0" ry="3.1" transform="rotate(29 243.4 280.0)"/><ellipse cx="249.9" cy="284.5" rx="4.0" ry="3.1" transform="rotate(38 249.9 284.5)"/><ellipse cx="255.9" cy="289.7" rx="4.0" ry="3.1" transform="rotate(40 255.9 289.7)"/><ellipse cx="262.0" cy="294.7" rx="4.0" ry="3.1" transform="rotate(39 262.0 294.7)"/><ellipse cx="268.1" cy="299.6" rx="4.0" ry="3.1" transform="rotate(36 268.1 299.6)"/><ellipse cx="274.6" cy="303.9" rx="4.0" ry="3.1" transform="rotate(33 274.6 303.9)"/><ellipse cx="281.3" cy="303.9" rx="4.1" ry="3.1" transform="rotate(-42 281.3 303.9)"/><ellipse cx="287.7" cy="298.3" rx="4.1" ry="3.1" transform="rotate(-40 287.7 298.3)"/><ellipse cx="294.4" cy="292.9" rx="4.1" ry="3.1" transform="rotate(-37 294.4 292.9)"/><ellipse cx="301.3" cy="287.8" rx="4.1" ry="3.1" transform="rotate(-36 301.3 287.8)"/><ellipse cx="308.3" cy="282.8" rx="4.1" ry="3.1" transform="rotate(-31 308.3 282.8)"/><ellipse cx="316.0" cy="278.9" rx="4.1" ry="3.1" transform="rotate(-21 316.0 278.9)"/><ellipse cx="324.4" cy="276.5" rx="4.1" ry="3.1" transform="rotate(-7 324.4 276.5)"/><ellipse cx="333.1" cy="276.8" rx="4.1" ry="3.1" transform="rotate(20 333.1 276.8)"/><ellipse cx="340.1" cy="282.1" rx="4.1" ry="3.1" transform="rotate(43 340.1 282.1)"/><ellipse cx="345.7" cy="288.6" rx="4.1" ry="3.1" transform="rotate(52 345.7 288.6)"/><ellipse cx="350.9" cy="295.6" rx="4.1" ry="3.1" transform="rotate(59 350.9 295.6)"/><ellipse cx="354.7" cy="303.3" rx="4.1" ry="3.1" transform="rotate(66 354.7 303.3)"/><ellipse cx="357.9" cy="311.3" rx="4.1" ry="3.1" transform="rotate(71 357.9 311.3)"/><ellipse cx="360.3" cy="319.5" rx="4.1" ry="3.1" transform="rotate(73 360.3 319.5)"/></g>
<g fill="none" stroke="#2c2c2c" stroke-width="2.6"><ellipse cx="276.5" cy="178.5" rx="4.5" ry="3.0" transform="rotate(84 276.5 178.5)"/><ellipse cx="277.4" cy="188.2" rx="4.5" ry="3.0" transform="rotate(84 277.4 188.2)"/><ellipse cx="278.4" cy="197.9" rx="4.5" ry="3.0" transform="rotate(84 278.4 197.9)"/><ellipse cx="279.6" cy="207.5" rx="4.5" ry="3.0" transform="rotate(83 279.6 207.5)"/><ellipse cx="280.7" cy="217.2" rx="4.5" ry="3.0" transform="rotate(84 280.7 217.2)"/><ellipse cx="281.7" cy="226.9" rx="4.5" ry="3.0" transform="rotate(84 281.7 226.9)"/><ellipse cx="282.6" cy="236.5" rx="4.5" ry="3.0" transform="rotate(87 282.6 236.5)"/><ellipse cx="282.6" cy="246.3" rx="4.5" ry="3.0" transform="rotate(92 282.6 246.3)"/><ellipse cx="281.9" cy="255.8" rx="4.5" ry="3.0" transform="rotate(105 281.9 255.8)"/><ellipse cx="277.6" cy="264.6" rx="4.5" ry="3.0" transform="rotate(117 277.6 264.6)"/><ellipse cx="273.3" cy="273.1" rx="4.5" ry="3.0" transform="rotate(108 273.3 273.1)"/><ellipse cx="271.9" cy="282.7" rx="4.5" ry="3.0" transform="rotate(93 271.9 282.7)"/><ellipse cx="272.3" cy="292.4" rx="4.5" ry="3.0" transform="rotate(85 272.3 292.4)"/><ellipse cx="273.6" cy="302.0" rx="4.5" ry="3.0" transform="rotate(82 273.6 302.0)"/></g>
<path d="M214.6 420.0 C212.7 422.6 205.8 429.8 203.4 435.8 C201.0 441.8 199.6 448.9 200.0 456.0 C200.4 463.1 202.1 470.9 205.7 478.3 C209.2 485.8 215.3 494.0 221.3 500.7 C227.3 507.4 233.7 513.8 241.5 518.6 C249.3 523.5 259.4 528.1 268.3 529.8 C277.2 531.5 285.9 530.6 295.2 528.7 C304.5 526.8 317.0 521.6 324.3 518.6 C331.6 515.6 334.5 515.5 339.0 510.8 C343.5 506.1 348.6 498.2 351.4 490.7 C354.2 483.2 355.3 473.8 355.9 466.0 C356.5 458.2 356.1 450.4 354.8 443.7 C353.5 437.0 351.2 430.8 348.0 425.8 C344.8 420.8 337.8 415.6 335.7 413.5" fill="none" stroke="#2c2c2c" stroke-width="2.8" stroke-linecap="round" stroke-linejoin="round" />
<path d="M265.0 454.8 C264.4 453.7 263.3 448.8 261.6 448.0 C259.9 447.2 256.8 448.4 254.9 450.3 C253.0 452.2 250.4 456.1 250.4 459.3 C250.4 462.5 252.3 467.2 254.9 469.4 C257.5 471.6 262.1 473.3 266.0 472.7 C269.9 472.1 276.0 469.2 278.4 466.0 C280.8 462.8 281.2 457.6 280.6 453.7 C280.0 449.8 277.8 445.3 275.0 442.5 C272.2 439.7 267.6 438.0 263.8 437.0 C260.0 436.0 255.6 435.3 252.0 436.5 C248.4 437.7 244.4 440.4 242.0 444.0 C239.6 447.6 237.6 452.7 237.5 458.0 C237.4 463.3 239.3 471.1 241.5 476.0 C243.7 480.9 245.9 484.3 250.4 487.3 C254.9 490.3 261.9 493.1 268.3 494.0 C274.7 494.9 282.9 494.8 288.5 492.9 C294.1 491.0 298.7 487.5 301.9 482.8 C305.1 478.1 307.1 471.2 307.5 464.9 C307.9 458.6 306.4 450.8 304.0 444.8 C301.6 438.8 297.1 432.9 293.0 429.0 C288.9 425.1 281.8 422.6 279.5 421.3" fill="none" stroke="#2c2c2c" stroke-width="2.8" stroke-linecap="round" stroke-linejoin="round" />
<path d="M270.500 422 L271.500 456" stroke="#c4c4c4" stroke-width="0.800"/>
<path d="M363.0 402.3 C364.6 404.9 370.2 413.7 372.5 418.0 C374.8 422.3 376.0 424.2 377.0 428.0 C378.0 431.8 378.2 438.8 378.5 441.0" fill="none" stroke="#2c2c2c" stroke-width="2.8" stroke-linecap="round" stroke-linejoin="round" />
<path d="M378.5 441.0 C375.3 442.3 362.3 445.0 359.5 448.6 C356.7 452.2 360.7 462.3 361.8 462.5 C362.9 462.7 365.3 451.9 366.0 449.8" fill="none" stroke="#2c2c2c" stroke-width="2.6" stroke-linecap="round" stroke-linejoin="round" />
<path d="M366.0 449.8 C371.5 449.5 385.8 448.0 399.0 447.8 C412.2 447.6 437.3 448.3 445.0 448.4" fill="none" stroke="#2c2c2c" stroke-width="2.6" stroke-linecap="round" stroke-linejoin="round" />
<path d="M445.0 448.4 L449.5 461.0" fill="none" stroke="#2c2c2c" stroke-width="2.8" stroke-linecap="round" stroke-linejoin="round" />
<path d="M391.3 377.6 C392.4 381.2 396.4 391.8 397.6 399.0 C398.8 406.2 399.5 413.9 398.5 421.0 C397.5 428.1 392.7 438.1 391.5 441.5" fill="none" stroke="#2c2c2c" stroke-width="2.8" stroke-linecap="round" stroke-linejoin="round" />
<path d="M391.5 441.5 C394.8 441.4 405.2 441.0 411.0 440.6 C416.8 440.2 421.2 439.6 426.4 439.2 C431.6 438.8 438.5 437.6 442.0 438.2 C445.5 438.8 446.2 439.0 447.5 442.8 C448.8 446.6 449.2 458.0 449.5 461.0" fill="none" stroke="#2c2c2c" stroke-width="2.8" stroke-linecap="round" stroke-linejoin="round" />
<path d="M155.7 385.6 C157.6 387.5 163.5 392.8 167.0 397.0 C170.5 401.2 175.9 405.6 176.7 410.8 C177.5 416.0 174.1 422.2 172.0 428.0 C169.9 433.8 165.3 442.8 164.0 445.7" fill="none" stroke="#2c2c2c" stroke-width="2.8" stroke-linecap="round" stroke-linejoin="round" />
<path d="M146.0 416.0 C146.4 418.7 147.8 426.8 148.5 432.0 C149.2 437.2 149.8 444.5 150.0 447.0" fill="none" stroke="#2c2c2c" stroke-width="2.8" stroke-linecap="round" stroke-linejoin="round" />
<path d="M150.0 447.0 C147.5 447.7 140.3 449.3 135.0 451.0 C129.7 452.7 122.9 454.8 118.0 457.0 C113.1 459.2 107.5 462.8 105.4 464.0" fill="none" stroke="#2c2c2c" stroke-width="2.8" stroke-linecap="round" stroke-linejoin="round" />
<path d="M105.4 464.0 L106.8 485.0" fill="none" stroke="#2c2c2c" stroke-width="2.8" stroke-linecap="round" stroke-linejoin="round" />
<path d="M106.8 485.0 C107.0 483.8 106.6 480.6 108.0 478.0 C109.4 475.4 113.8 470.9 115.0 469.5" fill="none" stroke="#2c2c2c" stroke-width="2.8" stroke-linecap="round" stroke-linejoin="round" />
<path d="M115.0 469.5 C120.2 468.1 135.0 462.9 146.0 461.0 C157.0 459.1 175.2 458.8 181.0 458.3" fill="none" stroke="#2c2c2c" stroke-width="2.8" stroke-linecap="round" stroke-linejoin="round" />
<path d="M164.0 445.7 L182.3 445.7" fill="none" stroke="#2c2c2c" stroke-width="2.8" stroke-linecap="round" stroke-linejoin="round" />
<path d="M182.3 445.7 L182.3 472.3" fill="none" stroke="#2c2c2c" stroke-width="2.8" stroke-linecap="round" stroke-linejoin="round" />
</g>
<path d="M124 328 H184.300 L174.500 448 L151.800 497.800 L131 448 Z" fill="#000" opacity="0.5"/>
<path d="M104 419 L148 419 L126.200 470.500 Z" fill="url(#pcone)" stroke="#6a5a3a" stroke-width="0.6"/>
<path d="M122.400 461.500 L130 461.500 L126.200 471 Z" fill="#000"/>
<path d="M96.600 301.500 Q126 299.800 156.200 301.500 L148 419 Q126 424.500 104 419.700 Z" fill="url(#pcl)" stroke="#7a6a30" stroke-width="0.7"/>
<path d="M97.500 302.800 Q126 300.800 155.800 302.800" stroke="#d8a830" stroke-width="0.900" fill="none"/><path d="M118 300.700 H137" stroke="#2a2410" stroke-width="1.300"/>
<ellipse cx="113.700" cy="352.200" rx="12.500" ry="14.700" fill="url(#eyeg)" stroke="#6a6458" stroke-width="1"/>
<ellipse cx="139.800" cy="352" rx="12.300" ry="14.800" fill="url(#eyeg)" stroke="#6a6458" stroke-width="1"/>
<path d="M101.300 350 A12.500 14.700 0 0 1 123.600 343 Q111 343.500 101.300 350 Z" fill="#f2ea78" stroke="#6a6458" stroke-width="0.800"/>
<path d="M130.600 342 A12.300 14.800 0 0 1 151.500 347 Q141 341 130.600 342 Z" fill="#f2ea78" stroke="#6a6458" stroke-width="0.800"/>
<circle cx="112.500" cy="353.300" r="3.600" fill="#000"/><circle cx="140.700" cy="353.300" r="3.600" fill="#000"/>
<path d="M114.100 392.500 Q118 397.500 123.500 396 Q131 393.500 138.700 382.700" fill="none" stroke="#000" stroke-width="1.400"/>
<path d="M260 403.200 L262.300 404.300 L261.500 419.600 L258 441 L233.500 503.500 L227.400 500.700 L253 441 L257.800 419.600 Z" fill="#000" opacity="0.48"/>
<path d="M255.900 401.300 L260 403.200 L257.800 419.600 L253 441 L227.400 500.700 L203 488.400 L233.500 427 L243 416.500 Z" fill="url(#mtool)"/>
<path d="M203 488.400 L233.500 427 L243 416.500 L255.900 401.300" fill="none" stroke="#4a4a4a" stroke-width="0.800" stroke-dasharray="1.500 1"/>
<path d="M203 488.400 L227.400 500.700" fill="none" stroke="#4a4a4a" stroke-width="0.800"/>
<path d="M254.4 405.1 L259.2 407.3" stroke="#4c4c4c" stroke-width="0.9"/><path d="M250.3 408.8 L258.6 412.1" stroke="#4c4c4c" stroke-width="0.9"/><path d="M246.6 413.6 L258.0 418.8" stroke="#4c4c4c" stroke-width="0.9"/><path d="M241.0 418.8 L256.8 424.8" stroke="#4c4c4c" stroke-width="0.9"/><path d="M233.5 427.0 L255.0 435.5" stroke="#4c4c4c" stroke-width="0.9"/>
</g></svg>

<div id="pal" class="abs" style="background:linear-gradient(#6e84e0 0px,#8fa4ee 3px,#8096e8 10px,#7488e0 20px,#7b8ee0 21px)"></div>
<div id="palc" class="abs"></div>
<div class="pt">Palette</div>
<div class="pb" style="left:555px"></div><div class="pb" style="left:584px"></div><div class="pb" style="left:613px"></div>
<div class="abs" style="left:555px;top:209px;width:52px;height:18px;background:#000;border:1px solid;border-color:#716f64 #fff #fff #716f64;box-sizing:border-box;width:53px;height:19px"></div>
<div class="abs" style="left:614px;top:206px;width:25px;height:24px;box-sizing:border-box;background:#fbfbf8;border:1px solid;border-color:#716f64 #fff #fff #716f64;box-shadow:inset 1px 1px 0 #aca899"></div>
<div class="abs" style="left:554px;top:236px;width:56px;height:176px;box-sizing:border-box;background:#fff;border:1px solid;border-color:#716f64 #fff #fff #716f64;box-shadow:inset 1px 1px 0 #aca899"></div>
<div class="sw" style="top:236px;background:#ffffff"></div><div class="ar" style="top:236px"></div>
<div class="sw" style="top:254px;background:#ff0000"></div><div class="ar" style="top:254px"></div>
<div class="sw" style="top:272px;background:#00ff00"></div><div class="ar" style="top:272px"></div>
<div class="sw" style="top:290px;background:#0000ff"></div><div class="ar" style="top:290px"></div>
<div class="sw" style="top:308px;background:#ffff00"></div><div class="ar" style="top:308px"></div>
<div class="sw" style="top:326px;background:#00ffff"></div><div class="ar" style="top:326px"></div>
<div class="sw" style="top:344px;background:#ff00ff"></div><div class="ar" style="top:344px"></div>
<div class="sw" style="top:362px;background:#8000ff"></div><div class="ar" style="top:362px"></div>
<div class="sw" style="top:380px;background:#408080"></div><div class="ar" style="top:380px"></div>
<div class="sw" style="top:398px;background:#000000"></div><div class="ar" style="top:398px"></div>

<svg class="abs" style="left:0;top:0" width="715" height="671" viewBox="0 0 715 671">
<defs>
<filter id="pb2" x="-30%" y="-30%" width="160%" height="160%"><feGaussianBlur stdDeviation="2.2"/></filter>
<filter id="pb3" x="-30%" y="-30%" width="160%" height="160%"><feGaussianBlur stdDeviation="3.2"/></filter>
<clipPath id="mixc"><rect x="556" y="238" width="52" height="173"/></clipPath>
</defs>
<!-- palette button icons -->
<path d="M561.500 194.500 V185.500 H566 L567 187 H572 V189" fill="#fffa80" stroke="#000" stroke-width="1"/>
<path d="M561.500 194.500 L564.500 189.500 H576 L573 194.500 Z" fill="#8c8c10" stroke="#000" stroke-width="1"/>
<path d="M570 183.500 Q573.500 181.500 575.500 185.500 M574 186 L576 186.500 L576.500 184" stroke="#000" stroke-width="0.9" fill="none"/>
<rect x="590.500" y="182.500" width="13" height="13" fill="#8c8c10" stroke="#000" stroke-width="1"/>
<rect x="593" y="183" width="8" height="5.500" fill="#d8d8d8"/>
<rect x="593.500" y="191" width="7" height="4.500" fill="#000"/><rect x="598" y="192" width="1.800" height="2.800" fill="#d8d8d8"/>
<path d="M619.500 183.500 L631.500 195.500 M631 183 L620.500 194.500" stroke="#901010" stroke-width="1.700" stroke-linecap="round"/>
<!-- palette eyedropper -->
<path d="M620.500 225 L621.500 222 L629 214.500 L631 216.500 L623.500 224 Z" fill="#f08040" stroke="#202020" stroke-width="0.9"/>
<path d="M627.800 213.200 L632.300 217.800" stroke="#000" stroke-width="2.500" stroke-linecap="round"/>
<path d="M630 215 L633 212" stroke="#000" stroke-width="5.500" stroke-linecap="round"/>
<!-- mix paint -->
<g clip-path="url(#mixc)">

<g filter="url(#pb3)">
<path d="M565 268 C568 260 576 258 582 254 C590 249 600 249 612 250 L612 332 L566 332 C559 318 560 290 565 268 Z" fill="#2cb41c"/>
<path d="M565 324 C575 320 600 320 612 324 L612 386 C604 392 596 388 588 392 C581 393 575 388 572 378 C567 360 561 338 565 324 Z" fill="#1818e0"/>
</g>
<g filter="url(#pb2)">
<path d="M590 252 C598 249 606 250 612 251 L612 300 C604 304 594 300 590 292 Z" fill="#b6e62c"/>
<path d="M580 256 C584 250 590 250 593 254 C595 264 594 276 590 284 C585 284 581 278 580 270 Z" fill="#f4f22a"/>
<path d="M582 290 C590 286 604 290 612 296 L612 320 C602 324 590 322 582 316 Z" fill="#7cd01c"/>
<path d="M563 294 C568 288 574 290 576 300 C578 312 572 320 566 322 C561 316 560 302 563 294 Z" fill="#0cdc0c"/>
<path d="M567 264 C572 258 578 264 579 272 C578 280 573 282 569 280 C566 274 566 268 567 264 Z" fill="#0c8814"/>
<path d="M566 326 C574 322 584 326 590 332 C586 342 574 344 568 338 Z" fill="#2a5a7c"/>
<path d="M590 320 C598 316 608 318 612 322 L612 338 C604 342 596 338 590 332 Z" fill="#0a7c14"/>
<path d="M572 346 C584 341 604 343 612 347 L612 372 C600 376 586 374 578 366 Z" fill="#0a0aea"/>
</g>
<g filter="url(#b1)"><path d="M573 366 C576 372 580 382 586 388" stroke="#ffffff" stroke-width="2.500" opacity="0.6" fill="none"/></g>
<ellipse cx="578" cy="396.500" rx="6" ry="1.200" fill="#2c4420" filter="url(#b05)"/>

</g>
</svg>
</body></html>
